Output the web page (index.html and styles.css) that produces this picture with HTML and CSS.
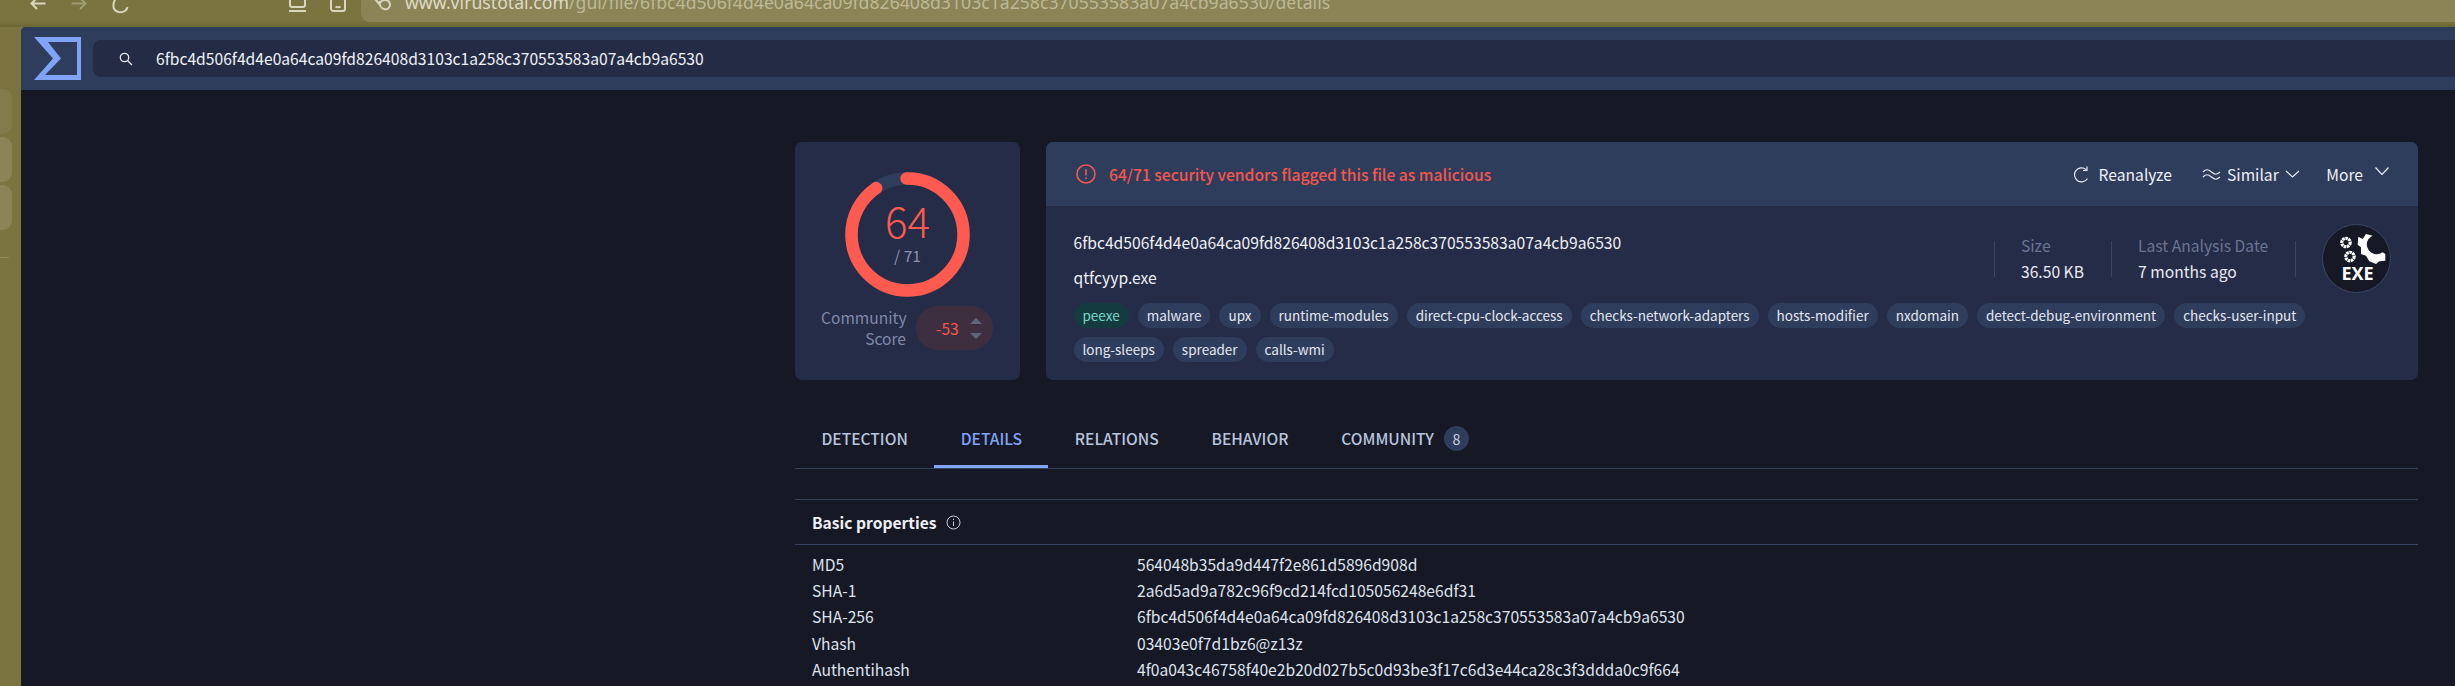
FILE: index.html
```html
<!DOCTYPE html>
<html lang="en">
<head>
<meta charset="utf-8">
<title>VirusTotal - File details</title>
<link rel="stylesheet" href="styles.css">
</head>
<body>
<div class="chrome">
  <div class="nav">
    <svg class="nav-icon" width="16" height="14" viewBox="0 0 16 14"><path d="M15.500 3.500H1.500M7 -2 1.500 3.500 7 9" class="st"/></svg>
    <svg class="nav-icon dim" width="16" height="14" viewBox="0 0 16 14"><path d="M.5 3.500h14M9 -2l5.500 5.500L9 9" class="st"/></svg>
    <svg class="nav-icon" width="17" height="14" viewBox="0 0 17 14"><path d="M15.500 7a7 6 0 0 1-14 -1.500C1.500 2.500 2.500 0 4 -2" class="st"/></svg>
  </div>
  <div class="nav-tools">
    <svg width="19" height="14" viewBox="0 0 19 14"><path d="M2 -2v7a2 2 0 0 0 2 2h11a2 2 0 0 0 2-2V-2M1 11h17" class="st"/></svg>
    <svg width="16" height="14" viewBox="0 0 16 14"><path d="M1 -2v10.500a2.500 2.500 0 0 0 2.500 2.500h9a2.500 2.500 0 0 0 2.500-2.500V-2M5.500 6.500c1.500 1 3.500 1 5 0" class="st"/></svg>
  </div>
  <div class="urlbar">
    <svg class="url-icon" width="18" height="22" viewBox="0 0 18 22"><path d="M1 -1l5 6M6 1c-1 4 1 7 4 8s6-1 6-4-2-5-5-5c-2 0-4 1-5 3" class="st"/></svg>
    <span class="url"><span class="url-host">www.virustotal.com</span>/gui/file/6fbc4d506f4d4e0a64ca09fd826408d3103c1a258c370553583a07a4cb9a6530/details</span>
  </div>
</div>
<div class="shell">
  <aside class="rail">
    <div class="rail-pill rail-pill-dim"></div>
    <div class="rail-pill"></div>
    <div class="rail-pill"></div>
    <div class="rail-sep"></div>
  </aside>
  <div class="app">
    <header class="topbar">
      <svg class="logo" width="47" height="43" viewBox="0 0 47 43"><path fill-rule="evenodd" d="M0 0H47V43H0L19 21.500ZM14 5 27 21.500 11 38H43V5Z"/></svg>
      <div class="search">
        <svg class="search-icon" width="14" height="14" viewBox="0 0 14 14"><circle cx="5.500" cy="5.500" r="4.200"/><path d="M8.500 8.500 13 13"/></svg>
        <span>6fbc4d506f4d4e0a64ca09fd826408d3103c1a258c370553583a07a4cb9a6530</span>
      </div>
    </header>
    <main class="content">
      <section class="summary">
        <div class="score-card">
          <div class="ring">
            <svg width="125" height="125" viewBox="0 0 125 125">
              <circle class="ring-track" cx="62.500" cy="62.500" r="56"/>
              <circle class="ring-value" cx="62.500" cy="62.500" r="56" stroke-dasharray="319 352" transform="rotate(-91 62.500 62.500)"/>
            </svg>
            <div class="ring-text">
              <div class="ring-num">64</div>
              <div class="ring-total">/ 71</div>
            </div>
          </div>
          <div class="community">
            <div class="community-label">Community<br>Score</div>
            <div class="vote">
              <span>-53</span>
              <div class="vote-arrows"><i class="up"></i><i class="down"></i></div>
            </div>
          </div>
        </div>
        <div class="file-card">
          <div class="file-head">
            <div class="alert">
              <svg width="20" height="20" viewBox="0 0 20 20"><circle cx="10" cy="10" r="9"/><path d="M10 5v6.500M10 13.500v1.500"/></svg>
              <span>64/71 security vendors flagged this file as malicious</span>
            </div>
            <div class="actions">
              <div class="action act-re">
                <svg width="15" height="17" viewBox="0 0 15 17"><path d="M13.500 12.500A7 7 0 1 1 12 3.500M13 .5V4.500H9" class="ln"/></svg>
                <span>Reanalyze</span>
              </div>
              <div class="action act-sim">
                <svg width="19" height="12" viewBox="0 0 19 12"><path d="M1 4c3-3 5-3 8.500 0s5 3 8.500 0M1 9c3-3 5-3 8.500 0s5 3 8.500 0" class="ln"/></svg>
                <span>Similar</span>
                <svg class="chev-sim" width="15" height="8" viewBox="0 0 15 8"><path d="M1 1l6.500 6L14 1" class="ln"/></svg>
              </div>
              <div class="action act-more">
                <span>More</span>
                <svg class="chev-more" width="14" height="8" viewBox="0 0 14 8"><path d="M.5.5 7 7.500 13.500.5" class="ln"/></svg>
              </div>
            </div>
          </div>
          <div class="file-body">
            <div class="file-top">
              <div class="file-names">
                <div>6fbc4d506f4d4e0a64ca09fd826408d3103c1a258c370553583a07a4cb9a6530</div>
                <div>qtfcyyp.exe</div>
              </div>
              <div class="stats">
                <div class="stat stat-size"><div class="stat-label">Size</div><div>36.50 KB</div></div>
                <div class="stat stat-date"><div class="stat-label">Last Analysis Date</div><div>7 months ago</div></div>
              </div>
              <svg class="exe" width="69" height="69" viewBox="0 0 69 69">
                <circle class="exe-disc" cx="34.500" cy="34.500" r="34"/>
                <g class="gear-ring">
                  <circle cx="24" cy="18.500" r="4.200"/>
                  <circle cx="28" cy="32.500" r="4.200"/>
                </g>
                <path class="gear" d="M36.300 12.700 40.700 15 44 10 50.700 11.700C46 14 44.500 18 45 22 46 28 53 33 60.700 28.300L63.300 30V36.700L57.300 37.300 54 40 47.300 37.300 44 31.700 39 30V23.300L35.700 20.700Z"/>
                <text class="exe-text" x="35.500" y="56">EXE</text>
              </svg>
            </div>
            <div class="tags">
              <span class="tag tag-green">peexe</span>
              <span class="tag">malware</span>
              <span class="tag">upx</span>
              <span class="tag">runtime-modules</span>
              <span class="tag">direct-cpu-clock-access</span>
              <span class="tag">checks-network-adapters</span>
              <span class="tag">hosts-modifier</span>
              <span class="tag">nxdomain</span>
              <span class="tag">detect-debug-environment</span>
              <span class="tag">checks-user-input</span>
              <span class="tag">long-sleeps</span>
              <span class="tag">spreader</span>
              <span class="tag">calls-wmi</span>
            </div>
          </div>
        </div>
      </section>
      <nav class="tabs">
        <div class="tab">DETECTION</div>
        <div class="tab active">DETAILS</div>
        <div class="tab">RELATIONS</div>
        <div class="tab">BEHAVIOR</div>
        <div class="tab tab-badge">COMMUNITY <span class="badge">8</span></div>
      </nav>
      <section class="details">
        <h2 class="details-title">
          <span>Basic properties</span>
          <svg width="15" height="15" viewBox="0 0 15 15"><circle cx="7.500" cy="7.500" r="6.500"/><path d="M7.500 6.500v4.500M7.500 3.800v1.200"/></svg>
        </h2>
        <dl class="props">
          <dt>MD5</dt><dd>564048b35da9d447f2e861d5896d908d</dd>
          <dt>SHA-1</dt><dd>2a6d5ad9a782c96f9cd214fcd105056248e6df31</dd>
          <dt>SHA-256</dt><dd>6fbc4d506f4d4e0a64ca09fd826408d3103c1a258c370553583a07a4cb9a6530</dd>
          <dt>Vhash</dt><dd>03403e0f7d1bz6@z13z</dd>
          <dt>Authentihash</dt><dd>4f0a043c46758f40e2b20d027b5c0d93be3f17c6d3e44ca28c3f3ddda0c9f664</dd>
        </dl>
      </section>
    </main>
  </div>
</div>
</body>
</html>
```
FILE: styles.css
```css
* { box-sizing: border-box; }
html, body { margin: 0; height: 686px; overflow: hidden; }
body {
  background: #7b7440;
  color: #e8ebf4;
  font-family: "Noto Sans CJK JP", "Noto Sans", sans-serif;
  font-size: 15.650px;
}
.st { fill: none; stroke: #d9d6bd; stroke-width: 2; overflow: visible; }
.chrome { height: 27px; display: flex; background: linear-gradient(#7b7440 0, #7b7440 20px, #6d6735 27px); overflow: hidden; }
.nav, .nav-tools { height: 22px; display: flex; }
.nav { width: 288px; padding-left: 30px; gap: 25px; }
.nav-icon.dim { opacity: .4; }
.nav-tools { width: 73px; gap: 23px; }
.urlbar {
  flex: 1;
  height: 22px;
  display: flex;
  align-items: flex-start;
  padding-left: 13px;
  gap: 13px;
  background: #8a8456;
  border-radius: 0 0 0 9px;
  overflow: hidden;
}
.url {
  margin-top: -11px;
  font: 17.650px/26px "Noto Sans", sans-serif;
  color: #bdb997;
  white-space: nowrap;
}
.url-host { color: #dedbc4; }
.shell { display: flex; height: 659px; }
.rail { width: 21px; flex: none; padding-top: 62px; display: flex; flex-direction: column; gap: 3px; background: #7b7440; }
.rail-pill { width: 12px; height: 45px; background: #8a8456; border-radius: 0 9px 9px 0; }
.rail-pill-dim { background: #827c4c; }
.rail-sep { width: 9px; height: 1px; margin-top: 24px; background: #8f8a60; }
.app { flex: 1; min-width: 0; background: #171825; border-radius: 5px 0 0 0; overflow: hidden; }
.topbar { height: 63px; display: flex; align-items: center; background: #2e3d5c; padding-left: 13px; gap: 12px; }
.logo { fill: #7fa3f7; flex: none; }
.search {
  flex: 1;
  height: 37px;
  display: flex;
  align-items: center;
  gap: 23px;
  padding-left: 26px;
  background: #242b45;
  border-radius: 8px 0 0 8px;
  color: #f0f2f8;
}
.search-icon { fill: none; stroke: #e6e8ee; stroke-width: 1.300; flex: none; }
.content { margin-left: 774px; width: 1623px; padding-top: 52px; }
.summary { display: flex; gap: 26px; height: 238px; }
.score-card { width: 225px; flex: none; background: #252c47; border-radius: 7px; display: flex; flex-direction: column; align-items: center; padding-top: 30px; }
.ring { position: relative; width: 125px; height: 125px; }
.ring svg { display: block; }
.ring circle { fill: none; stroke-width: 12.500; }
.ring-track { stroke: #2e3d5c; }
.ring-value { stroke: #ff5a50; stroke-linecap: round; }
.ring-text { position: absolute; inset: 0; display: flex; flex-direction: column; align-items: center; padding-top: 31px; }
.ring-num { font-size: 42px; font-weight: 300; line-height: 34px; color: #ff5a50; }
.ring-total { font-size: 15.600px; line-height: 18px; color: #8b93ae; margin-top: 9px; }
.community { display: flex; align-items: center; gap: 10px; margin-top: 9px; width: 100%; padding-left: 26px; }
.community-label { width: 85px; text-align: right; color: #7f89a8; font-size: 15.600px; line-height: 21px; white-space: nowrap; }
.vote { width: 77px; height: 44px; border-radius: 22px; background: #3d2f40; color: #f5574d; display: flex; align-items: center; padding-left: 20px; gap: 11px; }
.vote-arrows { display: flex; flex-direction: column; gap: 9px; }
.vote-arrows i { display: block; width: 0; height: 0; border-left: 6px solid transparent; border-right: 6px solid transparent; }
.up { border-bottom: 6px solid #5f6478; }
.down { border-top: 6px solid #5f6478; }
.file-card { flex: 1; background: #252c47; border-radius: 7px; overflow: hidden; }
.file-head { height: 64px; background: #2e3d5c; display: flex; align-items: center; justify-content: space-between; padding: 0 29px 0 30px; }
.alert { display: flex; align-items: center; gap: 13px; color: #f5574d; font-weight: 500; }
.alert svg { fill: none; stroke: #f5574d; stroke-width: 1.600; }
.actions { display: flex; align-items: center; color: #eef0f6; }
.action { display: flex; align-items: center; }
.ln { fill: none; stroke: #e8ebf4; stroke-width: 1.200; }
.act-re { gap: 10px; }
.act-sim { gap: 6px; margin-left: 30px; }
.act-more { gap: 12px; margin-left: 26.500px; }
.chev-more { margin-top: -6px; }
.file-body { padding: 18px 0 0 27.500px; }
.file-top { display: flex; height: 69px; padding-right: 27px; }
.file-names { flex: 1; display: flex; flex-direction: column; gap: 14px; line-height: 21px; padding-top: 8px; color: #eef0f6; }
.stats { display: flex; align-items: stretch; height: 36px; margin-top: 17px; border-right: 1px solid #3a4766; margin-right: 26px; }
.stat { border-left: 1px solid #3a4766; padding-left: 26px; line-height: 25px; }
.stat > div { margin-top: -8px; }
.stat > div + div { margin-top: 1px; }
.stat-size { width: 117px; }
.stat-date { width: 184px; }
.stat-label { color: #6b7592; }
.exe { flex: none; }
.exe-disc { fill: #171825; stroke: #3a4766; stroke-width: 1; }
.gear-ring circle { fill: none; stroke: #fff; stroke-width: 3.200; stroke-dasharray: 2.500 .6; }
.gear { fill: #fff; }
.exe-text { fill: #fff; font: 700 18px "Noto Sans", sans-serif; text-anchor: middle; }
.tags { display: flex; flex-wrap: wrap; gap: 9px; margin-top: 10px; width: 1240px; }
.tag { height: 25px; line-height: 24px; padding: 0 9px; background: #2e3d5c; border-radius: 13px; font-size: 13.500px; color: #e4e7f0; white-space: nowrap; }
.tag-green { background: #143c40; color: #79d6c6; }
.tabs { display: flex; margin-top: 28px; height: 61px; border-bottom: 1px solid #33415f; align-items: stretch; }
.tab { padding: 0 26.400px; height: 60px; font-weight: 500; font-size: 15.600px; color: #b8c4de; white-space: nowrap; display: flex; align-items: center; }
.tab.active { color: #7fa3f7; box-shadow: inset 0 -3px 0 #7fa3f7; }
.badge { width: 25px; height: 25px; line-height: 25px; border-radius: 50%; margin-left: 10px; background: #2e3d5c; color: #c6cede; text-align: center; font-size: 14.300px; font-weight: 400; }
.details { margin-top: 30px; border-top: 1px solid #33415f; }
.details-title { margin: 0; height: 45px; border-bottom: 1px solid #33415f; padding-left: 17px; display: flex; align-items: center; gap: 10px; font-size: 15.600px; font-weight: 700; color: #eef0f6; }
.details-title svg { fill: none; stroke: #c6cede; stroke-width: 1; }
.props { margin: 7px 0 0; padding-left: 17px; display: grid; grid-template-columns: 325px 1fr; grid-auto-rows: 26.200px; line-height: 26.200px; color: #dfe3ee; }
.props dt, .props dd { margin: 0; white-space: nowrap; }
```
